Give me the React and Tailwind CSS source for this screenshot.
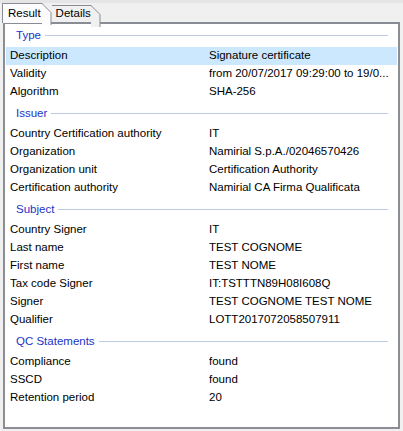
const sections = [
  {
    title: "Type",
    rows: [
      ["Description", "Signature certificate", true],
      ["Validity", "from 20/07/2017 09:29:00 to 19/0..."],
      ["Algorithm", "SHA-256"],
    ],
  },
  {
    title: "Issuer",
    rows: [
      ["Country Certification authority", "IT"],
      ["Organization", "Namirial S.p.A./02046570426"],
      ["Organization unit", "Certification Authority"],
      ["Certification authority", "Namirial CA Firma Qualificata"],
    ],
  },
  {
    title: "Subject",
    rows: [
      ["Country Signer", "IT"],
      ["Last name", "TEST COGNOME"],
      ["First name", "TEST NOME"],
      ["Tax code Signer", "IT:TSTTTN89H08I608Q"],
      ["Signer", "TEST COGNOME TEST NOME"],
      ["Qualifier", "LOTT2017072058507911"],
    ],
  },
  {
    title: "QC Statements",
    rows: [
      ["Compliance", "found"],
      ["SSCD", "found"],
      ["Retention period", "20"],
    ],
  },
]

function Tab({ label, active }) {
  return (
    <div
      className={
        active
          ? "relative z-10 h-[20px] mb-[-1px] pl-[5px] pr-[2px] flex items-center border-l border-t border-[#898c95] bg-[#fcfcfc]"
          : "relative h-[17px] pl-[4px] pr-[1px] flex items-center border-t border-[#898c95] bg-[#f0f0f0]"
      }
    >
      <span className="text-[11.5px] text-black">{label}</span>
      {/* slanted corner */}
      <svg className="absolute right-[-9px] top-[-1px]" width="10" height="22" viewBox="0 0 10 22">
        <path d="M0 0 L9 9 L9 22 L0 22 Z" fill={active ? "#fcfcfc" : "#f0f0f0"} />
        <path d="M0 0.5 L9 9.5 L9 22" fill="none" stroke="#898c95" strokeWidth="1" />
      </svg>
    </div>
  )
}

function Section({ title, rows, first }) {
  return (
    <div>
      <div className={`${first ? "h-[23px]" : "h-[23px] mt-[1px]"} flex items-center pl-[10px] pr-[9px] gap-[4px]`}>
        <span className="text-[11.5px] text-[#1a34c8] leading-none">{title}</span>
        <div className="flex-1 h-px bg-[#bccbe4]" />
      </div>
      {rows.map(([label, value, sel]) => (
        <div
          key={label}
          className={`h-[18px] flex items-center text-[11.5px] text-black ${sel ? "bg-[#cce8ff]" : ""}`}
        >
          <div className="w-[203px] pl-[4px] whitespace-nowrap">{label}</div>
          <div className="whitespace-nowrap">{value}</div>
        </div>
      ))}
    </div>
  )
}

export default function App() {
  return (
    <div
      className="w-[403px] h-[431px] bg-[#f0f0f0] border-t-[3px] border-[#e5e5e5] overflow-hidden"
      style={{ fontFamily: '"Liberation Sans", Arial, sans-serif' }}
    >
      <div className="flex items-end h-[19px] pl-[2px] gap-[9px]">
        <Tab label="Result" active />
        <Tab label="Details" />
      </div>
      <div className="ml-[3px] w-[397px] h-[407px] bg-white border-2 border-[#8c8e94] border-t-[#898c95] px-[1px]">
        {sections.map((s, i) => (
          <Section key={s.title} {...s} first={i === 0} />
        ))}
      </div>
    </div>
  )
}
